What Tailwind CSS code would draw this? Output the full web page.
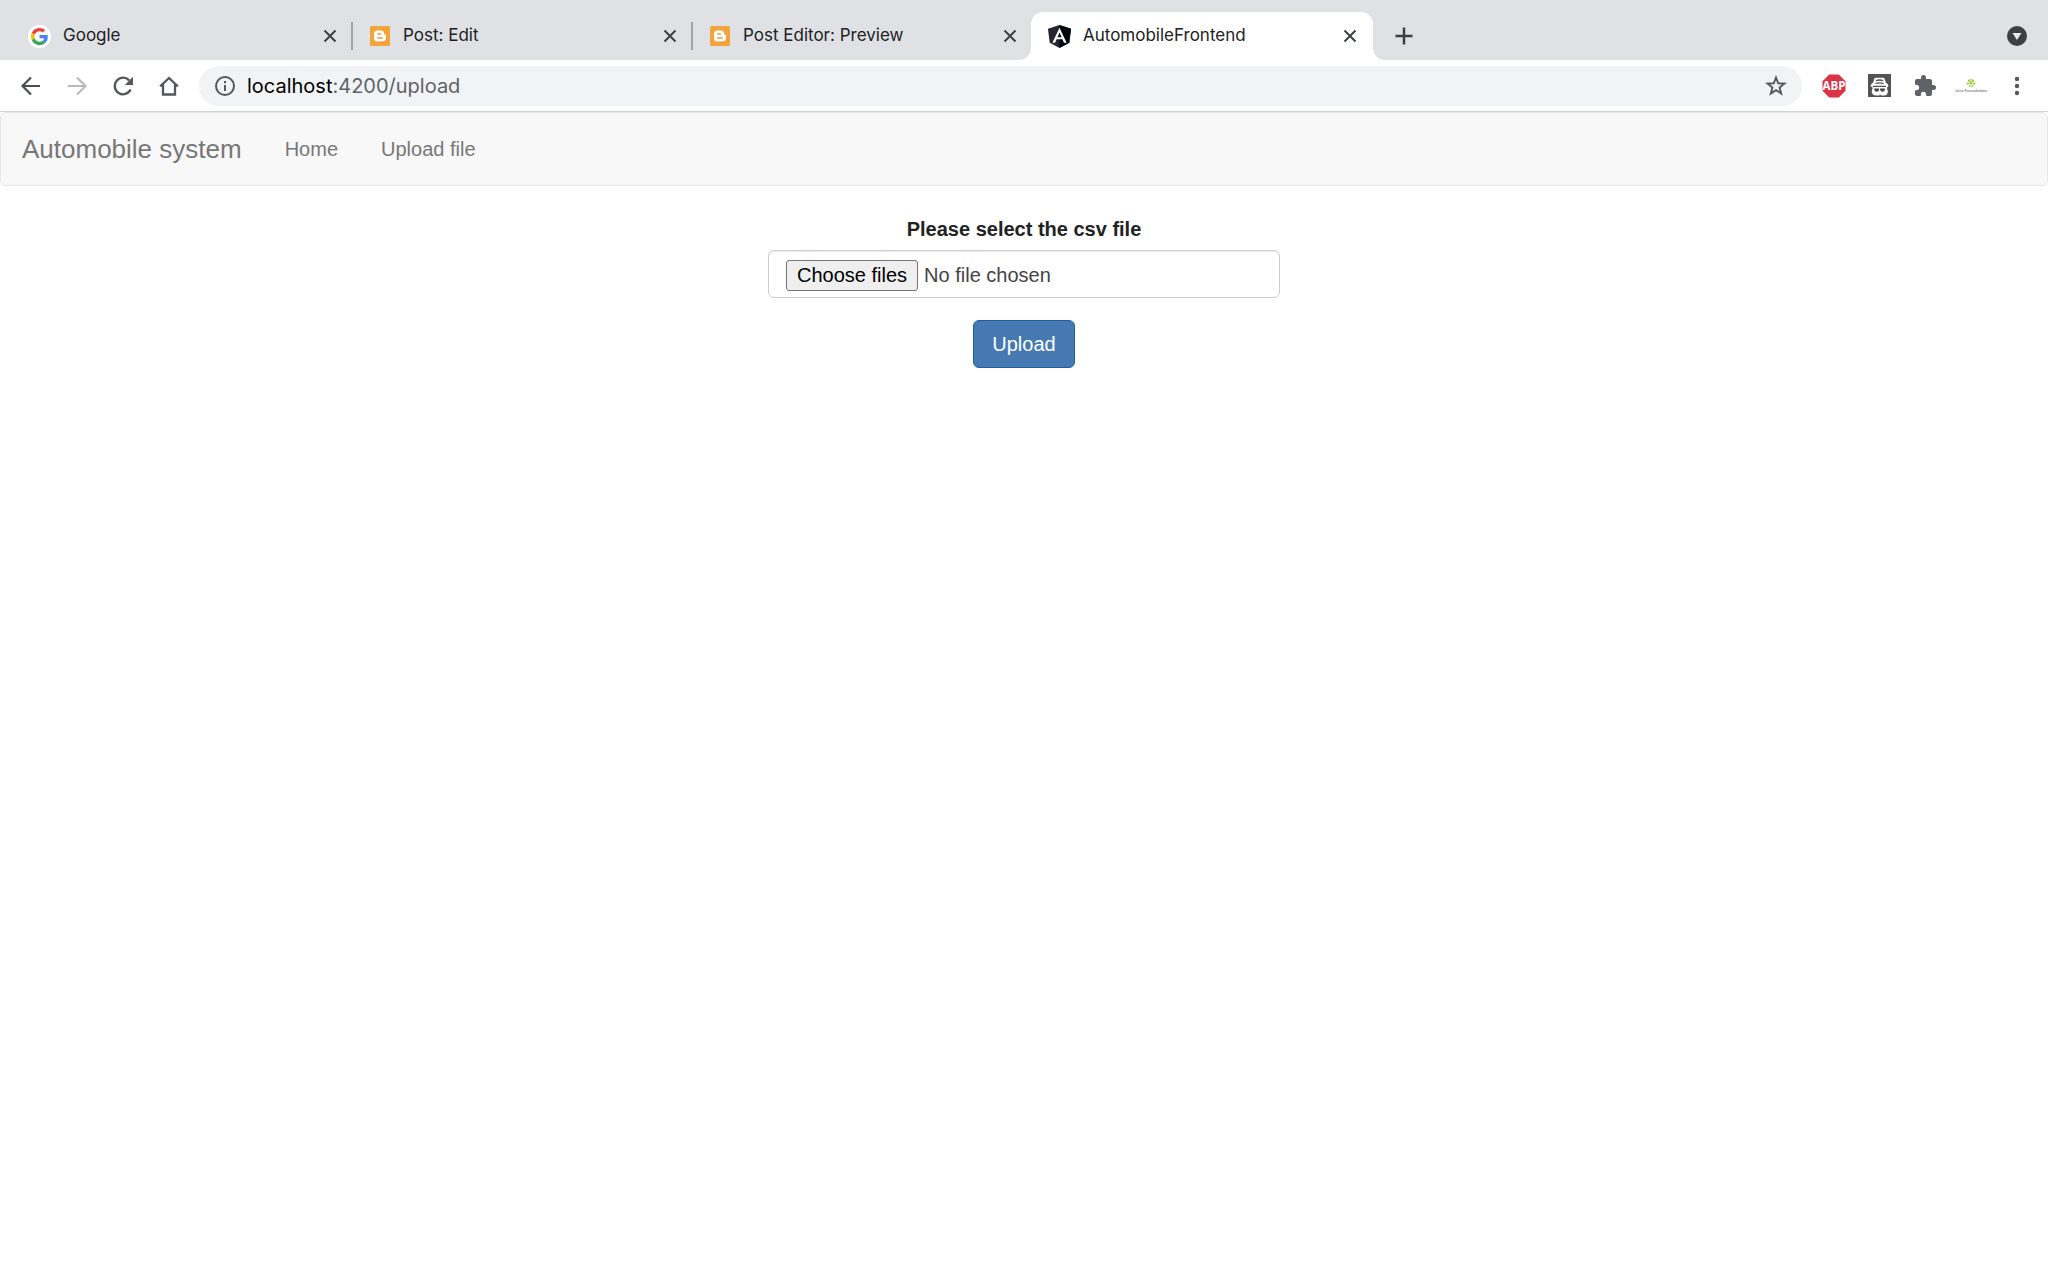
<!DOCTYPE html>
<html lang="en">
<head>
    <meta charset="UTF-8">
    <meta name="viewport" content="width=device-width, initial-scale=1.0">
    <title>AutomobileFrontend</title>
    <!-- Tailwind CSS (CDN) -->
    <script src="https://cdn.jsdelivr.net/npm/@tailwindcss/browser@4"></script>
</head>
<body class="bg-white text-[#333333] font-['Liberation_Sans',sans-serif] text-xl">
    <!-- Browser chrome -->
    <header class="font-['Inter',sans-serif]">
        <!-- Tab strip -->
        <div class="flex items-end h-15 bg-[#dfe1e5] pl-[11px] pr-5 text-[17px] text-[#202124]">
            <div class="w-[340px] h-12 flex items-center pl-[17px] pr-[14px]">
                <svg class="size-[23px] mr-3 shrink-0" viewBox="0 0 24 24">
                    <circle cx="12" cy="12" r="12" fill="#fff"/>
                    <g transform="translate(3 3) scale(.375)">
                        <path fill="#ea4335" d="M24 9.5c3.54 0 6.71 1.22 9.21 3.6l6.85-6.85C35.9 2.38 30.47 0 24 0 14.62 0 6.51 5.38 2.56 13.22l7.98 6.19C12.43 13.72 17.74 9.5 24 9.5z"/>
                        <path fill="#4285f4" d="M46.98 24.55c0-1.57-.15-3.09-.38-4.55H24v9.02h12.94c-.58 2.96-2.26 5.48-4.78 7.18l7.73 6c4.51-4.18 7.09-10.36 7.09-17.65z"/>
                        <path fill="#fbbc05" d="M10.53 28.59c-.48-1.45-.76-2.99-.76-4.59s.27-3.14.76-4.59l-7.98-6.19C.92 16.46 0 20.12 0 24c0 3.88.92 7.54 2.56 10.78l7.97-6.19z"/>
                        <path fill="#34a853" d="M24 48c6.48 0 11.93-2.13 15.89-5.81l-7.73-6c-2.15 1.45-4.92 2.3-8.16 2.3-6.26 0-11.57-4.22-13.47-9.91l-7.98 6.19C6.51 42.62 14.62 48 24 48z"/>
                    </g>
                </svg>
                <a href="#" class="flex-1">Google</a>
                <button type="button" aria-label="Close tab"><svg class="size-[14px]" viewBox="0 0 14 14" fill="none" stroke="#3c4043" stroke-width="2"><path d="M1.5 1.5l11 11M12.5 1.5l-11 11"/></svg></button>
            </div>
            <div class="w-[340px] h-12 flex items-center pr-[14px]">
                <span class="w-[2px] h-7 bg-[#a2a4a8] mr-[17px]"></span>
                <svg class="size-5 mr-[13px] shrink-0" viewBox="0 0 20 20">
                    <rect width="20" height="20" rx="1.5" fill="#f3a43b"/>
                    <path d="M9 15.5l6-5.5 2 2v2l-3 3h-3z" fill="#e8952d"/>
                    <path d="M7.5 4.500h3.200a3.500 3.500 0 0 1 3.500 3.400c0 .5.2.8.7.8h.3c.5 0 .8.3.8.8v2.500a3.500 3.500 0 0 1-3.500 3.500h-5A3.500 3.500 0 0 1 4 12V8a3.500 3.500 0 0 1 3.500-3.500z" fill="#fff"/>
                    <path d="M7.700 8h2.800M7.700 12h4.500" stroke="#f09a30" stroke-width="1.400" stroke-linecap="round"/>
                </svg>
                <a href="#" class="flex-1">Post: Edit</a>
                <button type="button" aria-label="Close tab"><svg class="size-[14px]" viewBox="0 0 14 14" fill="none" stroke="#3c4043" stroke-width="2"><path d="M1.5 1.5l11 11M12.5 1.5l-11 11"/></svg></button>
            </div>
            <div class="w-[340px] h-12 flex items-center pr-[14px]">
                <span class="w-[2px] h-7 bg-[#a2a4a8] mr-[17px]"></span>
                <svg class="size-5 mr-[13px] shrink-0" viewBox="0 0 20 20">
                    <rect width="20" height="20" rx="1.5" fill="#f3a43b"/>
                    <path d="M9 15.5l6-5.500 2 2v2l-3 3h-3z" fill="#e8952d"/>
                    <path d="M7.500 4.500h3.200a3.500 3.500 0 0 1 3.500 3.400c0 .5.2.8.7.8h.3c.5 0 .8.3.8.8v2.500a3.500 3.500 0 0 1-3.500 3.500h-5A3.500 3.500 0 0 1 4 12V8a3.500 3.500 0 0 1 3.500-3.500z" fill="#fff"/>
                    <path d="M7.700 8h2.800M7.700 12h4.500" stroke="#f09a30" stroke-width="1.400" stroke-linecap="round"/>
                </svg>
                <a href="#" class="flex-1">Post Editor: Preview</a>
                <button type="button" aria-label="Close tab"><svg class="size-[14px]" viewBox="0 0 14 14" fill="none" stroke="#3c4043" stroke-width="2"><path d="M1.5 1.5l11 11M12.5 1.5l-11 11"/></svg></button>
            </div>
            <!-- Active tab -->
            <div class="relative w-[342px] h-12 flex items-center pl-[17px] pr-4 bg-white rounded-t-xl">
                <svg class="absolute -left-3 bottom-0 size-3" viewBox="0 0 12 12" fill="#fff"><path d="M12 0v12H0A12 12 0 0 0 12 0z"/></svg>
                <svg class="absolute -right-3 bottom-0 size-3" viewBox="0 0 12 12" fill="#fff"><path d="M0 0v12h12A12 12 0 0 1 0 0z"/></svg>
                <svg class="size-[23px] mr-3 shrink-0" viewBox="0 0 23 23">
                    <path d="M11.500 0L23 3.800l-1.700 14L11.500 23l-9.800-5.200L0 3.800z" fill="#23252f"/>
                    <path d="M11.500 0L23 3.800l-1.700 14L11.500 23z" fill="#05060f"/>
                    <path d="M11.500 2.700L4.400 17.700h2.700l1.400-3.400h6l1.400 3.400h2.700zM11.500 7.500l2.100 4.700H9.400z" fill="#fff" fill-rule="evenodd"/>
                </svg>
                <a href="#" class="flex-1">AutomobileFrontend</a>
                <button type="button" aria-label="Close tab"><svg class="size-[14px]" viewBox="0 0 14 14" fill="none" stroke="#3c4043" stroke-width="2"><path d="M1.5 1.5l11 11M12.5 1.5l-11 11"/></svg></button>
            </div>
            <div class="flex-1 h-12 flex items-center justify-between pl-[22px]">
                <button type="button" aria-label="New tab"><svg class="size-[18px]" viewBox="0 0 18 18" fill="none" stroke="#3c4043" stroke-width="2.500"><path d="M9 .5v17M.5 9h17"/></svg></button>
                <button type="button" aria-label="Search tabs" class="mr-px"><svg class="size-5" viewBox="0 0 20 20"><circle cx="10" cy="10" r="10" fill="#3c4043"/><path d="M5.500 7h9L10 14z" fill="#e8eaed"/></svg></button>
            </div>
        </div>

        <!-- Toolbar -->
        <div class="flex items-center h-[52px] px-[19px] bg-white border-b border-[#d0d2d5] text-[#54575c]">
            <div class="flex gap-[22px] mr-[18px]">
                <button type="button" aria-label="Back"><svg class="size-6" viewBox="0 0 24 24" fill="none" stroke="#4a4d52" stroke-width="2.200"><path d="M21 12H4M12 3.500L3.500 12l8.500 8.500"/></svg></button>
                <button type="button" aria-label="Forward"><svg class="size-6" viewBox="0 0 24 24" fill="none" stroke="#b9babd" stroke-width="2.200"><path d="M3 12h17M12 3.500l8.500 8.500-8.500 8.500"/></svg></button>
                <button type="button" aria-label="Reload"><svg class="size-6" viewBox="0 0 24 24"><path d="M19.600 15.500A8.300 8.300 0 1 1 18.200 6.400" fill="none" stroke="currentColor" stroke-width="2.300"/><path d="M22 2.800v8.200h-8.200z" fill="currentColor"/></svg></button>
                <button type="button" aria-label="Home"><svg class="size-6" viewBox="0 0 24 24" fill="none" stroke="currentColor" stroke-width="2.300"><path d="M3.200 12.400L12 4l8.800 8.400M6 10.500v10h12v-10"/></svg></button>
            </div>
            <div class="flex-1 h-10 flex items-center bg-[#f1f3f4] rounded-full pl-4 pr-[15px]">
                <svg class="size-5 mr-3 shrink-0" viewBox="0 0 20 20" fill="none" stroke="currentColor" stroke-width="2"><circle cx="10" cy="10" r="9"/><path d="M10 9v6M10 5v2.200"/></svg>
                <a href="#" class="flex-1 text-xl text-[#5f6368]"><span class="text-black">localhost</span>:4200/upload</a>
                <button type="button" aria-label="Bookmark this tab"><svg class="size-[22px]" viewBox="0 0 22 22" fill="none" stroke="currentColor" stroke-width="1.900"><path d="M11 2.500l2.200 5.800 6.200.3-4.800 3.900 1.600 6L11 15.100l-5.200 3.400 1.600-6-4.800-3.900 6.200-.3z"/></svg></button>
            </div>
            <div class="flex items-center gap-[22px] ml-5">
                <svg class="size-6" viewBox="0 0 24 24">
                    <path d="M7.200.5h9.600l6.700 6.700v9.600l-6.700 6.700H7.200L.5 16.800V7.200z" fill="#db3345"/>
                    <text x="12" y="16.200" text-anchor="middle" font-family="Open Sans, sans-serif" font-size="11.500" font-weight="700" fill="#fff">ABP</text>
                </svg>
                <svg class="size-[23px]" viewBox="0 0 23 23">
                    <rect width="23" height="23" fill="#535353"/>
                    <path d="M6.500 4.200Q7 3.800 8.200 3.800h6.800q1.200 0 1.600 1l1.200 3.700q2.700 1.500 2.700 3.500l-1.600 1.800 1 3.700q-.3 3.800-3.700 4.100h-3l-1-1-1 1h-3Q4 21.300 3.700 17.500l1-3.700L2.500 12q0-2 2.700-3.500z" fill="#fff"/>
                    <path d="M8 6.600q3.700-1.200 7.200 0M7.500 9.500q4-1.200 8.200 0M5 12.300h13" fill="none" stroke="#535353" stroke-width="1.300"/>
                    <path d="M6.300 14.600h4.800v1.200q-.4 2-2.400 2t-2.400-2zM12.100 14.600h4.800v1.200q-.4 2-2.400 2t-2.400-2z" fill="#444"/>
                </svg>
                <svg class="size-6" viewBox="0 0 24 24" fill="#5f6368"><path d="M20.500 11H19V7c0-1.100-.9-2-2-2h-4V3.500a2.500 2.500 0 0 0-5 0V5H4c-1.100 0-2 .9-2 2v3.800h1.500c1.500 0 2.700 1.200 2.700 2.700S5 16.200 3.500 16.200H2V20c0 1.100.9 2 2 2h3.800v-1.500c0-1.500 1.200-2.700 2.700-2.700s2.700 1.200 2.700 2.700V22H17c1.100 0 2-.9 2-2v-4h1.500a2.500 2.500 0 0 0 0-5z"/></svg>
                <svg class="w-8 h-6 -mx-1" viewBox="0 0 32 24">
                    <g fill="#a5c94b"><circle cx="16" cy="9" r="1.700"/><circle cx="14" cy="6.800" r="1.200"/><circle cx="18" cy="6.800" r="1.200"/><circle cx="12.800" cy="9.600" r="1.200"/><circle cx="19.200" cy="9.600" r="1.200"/><circle cx="16" cy="5.800" r=".9"/><circle cx="14.800" cy="12" r="1"/><circle cx="17.500" cy="12" r="1"/></g>
                    <text x="16" y="17.500" text-anchor="middle" font-family="Lato, sans-serif" font-size="4.500" fill="#666">Java Foundation</text>
                </svg>
                <button type="button" aria-label="Menu"><svg class="size-6" viewBox="0 0 24 24" fill="currentColor"><circle cx="12" cy="5" r="2.200"/><circle cx="12" cy="12" r="2.200"/><circle cx="12" cy="19" r="2.200"/></svg></button>
            </div>
        </div>
    </header>

    <!-- Navbar -->
    <nav class="flex items-center h-[74px] bg-[#f8f8f8] border border-[#e7e7e7] rounded-md pl-[21px] mb-7 text-[#777777]">
        <a href="#" class="text-[26px] mr-[43px]">Automobile system</a>
        <a href="#" class="mr-[43px]">Home</a>
        <a href="#">Upload file</a>
    </nav>

    <!-- Upload form -->
    <form class="w-1/4 mx-auto flex flex-col items-center">
        <label for="csvFile" class="font-bold leading-[30px] mb-[6px] text-[#222222]">Please select the csv file</label>
        <div class="relative w-full h-12 flex items-center border border-[#cccccc] rounded-md shadow-[inset_0_1px_1px_rgba(0,0,0,0.075)] pl-[17px] pt-[2px] mb-[22px] text-[#444444]">
            <span class="flex items-center h-[31px] px-[10px] mr-[6px] bg-[#efefef] border border-[#767676] rounded-[3px] text-black">Choose files</span>
            <span>No file chosen</span>
            <input id="csvFile" type="file" multiple class="absolute inset-0 w-full h-full opacity-0 cursor-pointer">
        </div>
        <button type="button" class="h-12 px-[18px] bg-[#4679b2] border border-[#1f5f9f] rounded-md text-white">Upload</button>
    </form>
</body>
</html>
